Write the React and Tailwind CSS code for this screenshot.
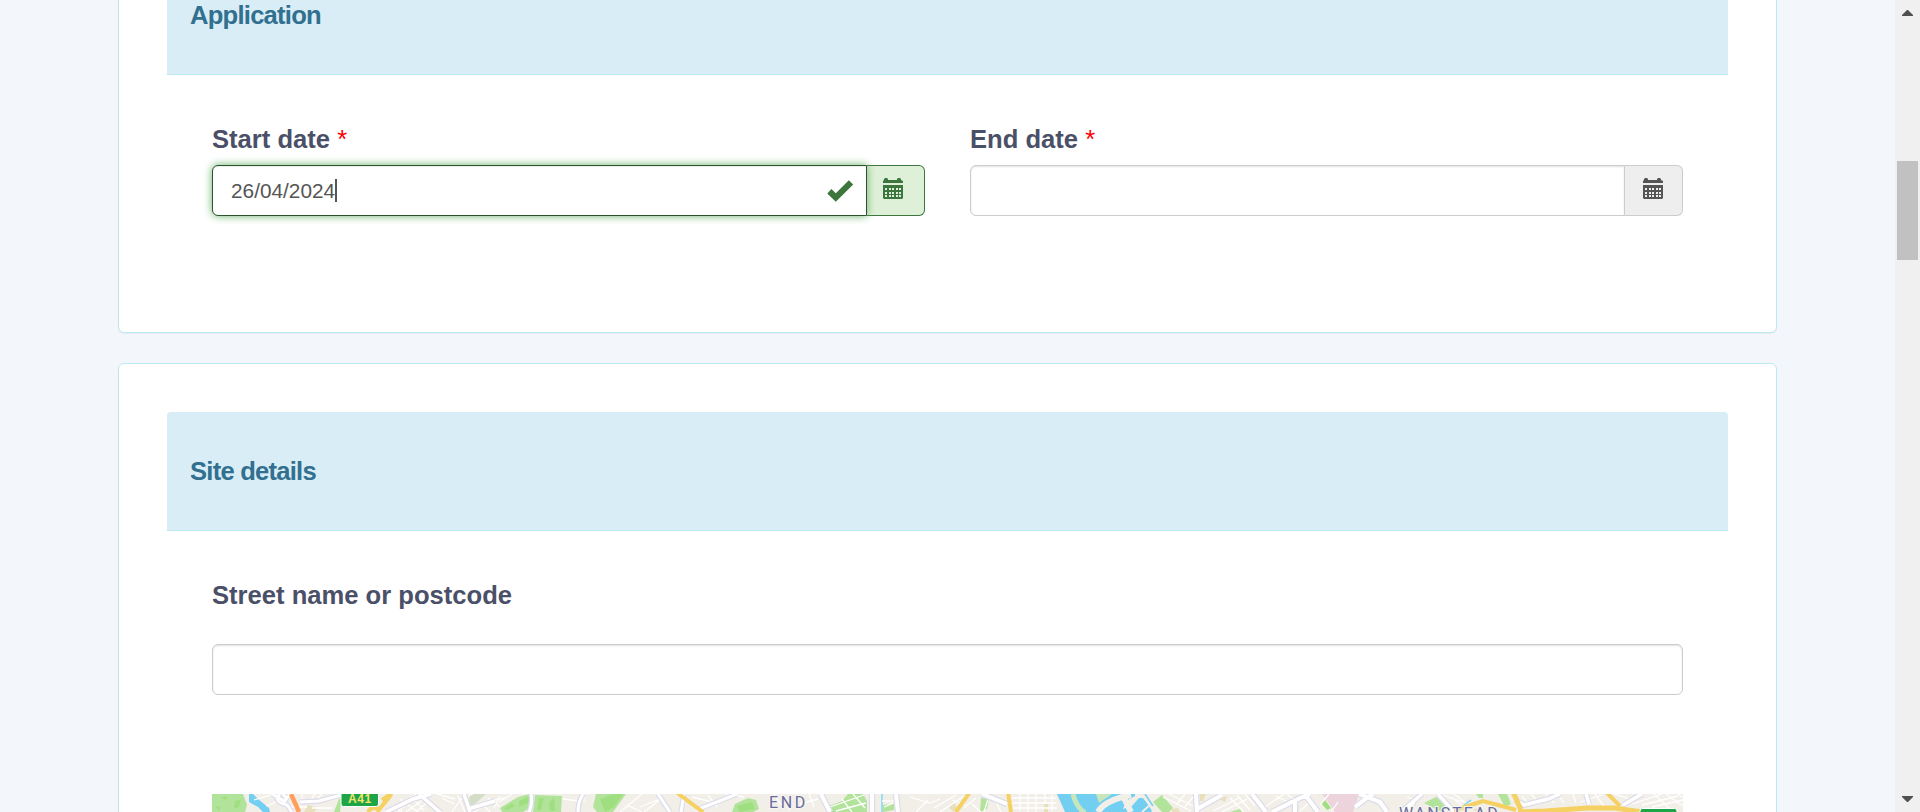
function CalendarIcon() {
  const cols = [2, 6, 9, 13, 16];
  const rows = [10, 14, 17];
  return (
    <svg width="20" height="21" viewBox="0 0 20 21" className="mb-1" fill="currentColor" aria-hidden="true">
      <path d="M0 5V3l1-1V1l1-1h2l1 1v1h9V1l1-1h2l1 1v1l2 1v2z" />
      <path
        fillRule="evenodd"
        d={
          'M0 7h20v13l-1 1H1l-1-1z' +
          rows.map((y) => cols.map((x) => `M${x} ${y}h2v2h-2z`).join('')).join('')
        }
      />
    </svg>
  );
}

function CheckIcon() {
  return (
    <svg width="27" height="22" viewBox="0 0 27 22" fill="#3c763d" aria-hidden="true">
      <path d="M.3 13.4 4.4 9l4.4 4.2L21.8.3l4.4 4.3L8.8 21.8z" />
    </svg>
  );
}

function PanelHeading({ children }) {
  return (
    <div className="flex h-[119px] items-center rounded-t-[4px] border-b border-[#bce8f1] bg-[#d9edf7] px-[23px]">
      <h3 className="text-[25.6px] leading-9 font-bold tracking-[-0.03em] text-[#31708f]">{children}</h3>
    </div>
  );
}

function Panel({ title, className, children }) {
  return (
    <section
      className={`rounded-[6px] border border-[#bce8f1] bg-white px-12 pt-12 shadow-[0_1px_1px_rgba(0,0,0,0.05)] ${className}`}
    >
      <PanelHeading>{title}</PanelHeading>
      <div className="px-[45px] pt-[46px]">{children}</div>
    </section>
  );
}

function DateField({ label, value, valid }) {
  return (
    <div className="flex-1">
      <div className="mb-2 text-[25.6px] leading-9 font-bold text-[#4a5068]">
        {label} <span className="font-normal text-[#ff0000]">*</span>
      </div>
      <div className="flex h-[51px]">
        <div
          className={
            valid
              ? 'z-10 flex w-[655px] items-center justify-between rounded-l-[6px] border border-[#2b542c] bg-white pr-3 pl-[18px] shadow-[inset_0_1px_1px_rgba(0,0,0,0.075),0_0_8px_#67b168]'
              : 'flex w-[655px] items-center rounded-l-[6px] border border-[#ccc] bg-white pl-[18px] shadow-[inset_0_1px_2px_rgba(0,0,0,0.12)]'
          }
        >
          {valid && (
            <>
              <div className="flex items-center">
                <span className="text-[20.8px] leading-7 text-[#555]">{value}</span>
                <span className="h-[23px] w-[2px] bg-[#555]" />
              </div>
              <CheckIcon />
            </>
          )}
        </div>
        <div
          className={
            valid
              ? 'flex flex-1 items-center justify-center rounded-r-[6px] border border-l-0 border-[#3c763d] bg-[#dff0d8] pr-1.5 text-[#3c763d]'
              : 'flex flex-1 items-center justify-center rounded-r-[6px] border border-l-0 border-[#ccc] bg-[#eee] pr-px text-[#555]'
          }
        >
          <CalendarIcon />
        </div>
      </div>
    </div>
  );
}

function Road({ d, w = 4 }) {
  return (
    <>
      <path d={d} fill="none" stroke="#dcdcea" strokeWidth={w + 2.4} />
      <path d={d} fill="none" stroke="#fff" strokeWidth={w} />
    </>
  );
}

function Street({ d }) {
  return <path d={d} fill="none" stroke="#fff" strokeWidth="1.3" />;
}

function MapStrip() {
  return (
    <svg width="1471" height="18" viewBox="0 0 1471 18" className="block w-full" aria-label="Map">
      <rect width="1471" height="18" fill="#f2eee8" />

      {/* parks */}
      <g fill="#b2e39b">
        <path d="M0 0h31l4 11-2 7H0z" />
        <path d="M122 18l5-13 3-1-2 14z" />
        <path d="M288 14 306 3l12-3v14l-7 4h-21z" />
        <path d="M323 1 350 2l-1 16h-28z" />
        <path d="M384 0h30l-13 18h-16l-4-5z" />
        <path d="M523 10l13-6 8 2 3 9-6 3h-21z" />
        <path d="M617 12l13-5 6-7h15l4 7v11h-38z" />
        <path d="M671 11l11-1v6l-11 2z" />
        <path d="M769 4l8 1-2 10-7 3z" />
        <path d="M941 8l9-7 11 13-4 4h-7z" />
        <path d="M1212 9l12-6 9 7-3 8-8-4z" />
        <path d="M1264 0h7v4h-4z" />
        <path d="M1286 0h9l4 10-6 3z" />
        <path d="M1018 18l10-3 2 3z" />
      </g>
      <g fill="#a0df80">
        <path d="M9 4l7-2-2 4zM23 7l6-2-2 8-5 2zM3 12l6 1-2 3z" />
        <path d="M307 7l10-5-1 7-9 4zM292 14l8-5 3 3-8 4z" />
        <path d="M327 4h5l-3 12h-4zM337 9l5-6 1 14h-5z" />
        <path d="M388 5l13-5h10l-9 13-9 5z" />
        <path d="M525 12l15-4 3 7-15 3z" />
        <path d="M1109 9l4-3 6 8-4 2z" />
      </g>
      <g fill="#e8dfbb">
        <path d="M96 11l10 3-4 4H92zM737 14l5-5 3 4-3 5zM832 10h4v8h-4zM960 15l6-1 2 4h-8zM988 0h6l-3 7h-3zM1007 5l8-3-2 6zM1103 14l4-1-1 5zM1260 16l8-2 2 4z" />
      </g>
      <path d="M258 0h16l-10 9-8 5z" fill="#d4dec7" />
      <path d="M1110 0h37l-6 18h-18z" fill="#ecd3dc" />

      {/* water */}
      <g fill="#73cff1">
        <path d="M37 0h4l5 5 11 9 1 4H51l-5-5-9-5z" />
        <path d="M845 0h78v2l-9 5-3 8 9-3 7-8h5l8 13-1 1h-86z" />
      </g>
      <path d="M670 0v18" stroke="#9bddf3" strokeWidth="2" />
      <path d="M1252 11l7-5" stroke="#73cff1" strokeWidth="1.5" />
      <path d="M861 0q3 13 12 19" fill="none" stroke="#c8e6bb" strokeWidth="5" />
      <path d="M884 0h16l-13 9z" fill="#c8e6bb" />
      <path d="M886 18q7-12 33-17M912 4l7 14" fill="none" stroke="#f2eee8" strokeWidth="6" />
      <path d="M929 0l9 11-8 7" fill="none" stroke="#f2eee8" strokeWidth="2" />
      <path d="M933 0l8 12" stroke="#73cff1" strokeWidth="1.5" />

      {/* side streets */}
      <Street d="M42 6l20-6M54 12l10-4M90 8V0M98 7l5-7M105 5l5-5M77 13h18M120 14h-20" />
      <Street d="M186 18l18-18M194 18l18-13M204 18l14-12M180 11l10 7M188 5l18 13M198 2l14 14M240 18l9-13 12-5M230 4l12 6M225 0l18 5M246 2l7 16" />
      <Street d="M262 18l19-12 12-2M270 10l8 8M276 4l12 9M288 2l-6 12M300 0l-13 8" />
      <Street d="M351 5l16 2M372 0v8M415 11l15 7M408 18l22-18M428 13l20-8M432 18l18-14M463 0l10 5M480 3l24 6M496 1l9 12M510 8l12-5M514 0l18 3" />
      <Street d="M562 0l7 11M570 1l7 15M588 10l18-5M597 0l5 13M618 13l34-12M624 17l30-8M630 5l10 13M641 0l12 14M670 7h15M672 13l12-5M698 3l20 6 10-4M704 18l12-12M722 14l22-13M728 18l24-16M740 6l14 5M784 8l5 10M777 2l-5 16" />
      <Street d="M800 4h44M800 9h44M801 14h44M808 0v17M816 0v18M824 0v18M833 0v10M840 1v16M760 10l9 8M752 14l12-10" />
      <Street d="M951 3l28 14M957 0l24 12M965 10l8-10M972 14l9-11M1001 17l26-13M1010 18l25-13M1018 4l14 14M1025 1l13 15M1033 0l10 12M1050 15l22-15M1064 2l10 5M1075 0l9 7M1088 17l10-9M1119 18l7-10M1117 0l-9 11" />
      <Street d="M1195 3l12 4M1239 3l13 10M1227 0l24 8M1242 0l12 9M1310 2l8 10M1319 0l9 10M1334 0l8 9M1346 0l6 9M1361 0l3 9M1368 8l22-7M1383 0l9 12M1402 0l16 5M1420 10l30-10M1430 11l36-9M1440 13l31-7M1442 0l17 16M1454 0l17 12M1466 0l5 4" />

      {/* roads */}
      <Road d="M68 0q-8 7 7 11l5 7M71 0l4 5M60 0l14 8M78 0l-6 8" w={3} />
      <Road d="M88 8l19-1 22-6" w={3} />
      <Road d="M174 18l27-13 18-5M207 0l22 19M252 0l6 18M256 15l27-8" w={3.5} />
      <Road d="M319 0q2 10-2 18M371 0q-5 8-5 18M446 0l12 18M472 0l-3 18M487 15l38-15" w={3} />
      <Road d="M609 0l9 18M660 0v18M684 0l2 18M770 0l25 10" w={4} />
      <Road d="M984 0l1 18M985 15l25-14M1040 0l14 18M1060 18l28-14 10-4M1094 2l12 16M1083 5v13M1143 13l12-9 6-4M1147 0l21 8 7 10" w={4} />
      <Road d="M1189 18l21-18M1194 18l8-10M1226 0l16 18M1303 6l9 5 24-6 12-5M1374 0l3 10M1411 11l19-11" w={3.5} />

      {/* main roads */}
      <path d="M79 0l8 18" stroke="#ff9f5a" strokeWidth="4.5" />
      <path d="M156 18q4-7 13-2M170 6l10-7M165 18l14-17" stroke="#f5d063" strokeWidth="4" fill="none" />
      <path d="M462-2l28 20M758-1l-16 20M835-1l3 20" stroke="#f5d063" strokeWidth="4" transform="translate(2 0)" className="hidden" />
      <g fill="none" stroke="#f5d063" strokeWidth="4">
        <path d="M464-2l27 20" />
        <path d="M758-2l-14 20" />
        <path d="M796-2l3 20" />
        <path d="M1242 16l14-4 15-5 15 4 18 5" />
        <path d="M1301-2l8 18" strokeWidth="5" />
        <path d="M1306 18l27-1 43-3h26l28 4" strokeWidth="5" />
        <path d="M1394-2l14 14" />
      </g>

      {/* route shields */}
      <rect x="129" y="-6" width="37.5" height="18.5" rx="2.5" fill="#1da548" stroke="#fff" />
      <text x="148" y="8.5" textAnchor="middle" fill="#f6e36b" fontSize="12" fontWeight="700" letterSpacing="0.6" className="font-['Liberation_Sans',sans-serif]">A41</text>
      <rect x="1428" y="14.5" width="37" height="18" rx="2.5" fill="#1da548" stroke="#fff" />

      {/* place names */}
      <g fill="#666c9b" stroke="#f7f5f2" strokeWidth="2" paintOrder="stroke" fontSize="16" className="font-['Roboto',sans-serif]">
        <text x="557" y="13.5" letterSpacing="2.6">END</text>
        <text x="1187" y="25" letterSpacing="2">WANSTEAD</text>
      </g>
    </svg>
  );
}

function Scrollbar() {
  return (
    <div className="flex h-full w-[25px] flex-col items-center justify-between bg-[#f0f0f0] pt-[10px] pb-[10px]">
      <svg width="11" height="6" viewBox="0 0 11 6" fill="#505050" aria-hidden="true">
        <path d="M5 0h1l5 5v1H0V5z" />
      </svg>
      <div className="mt-[145px] mb-auto h-[99px] w-[21px] bg-[#c1c1c1]" />
      <svg width="11" height="6" viewBox="0 0 11 6" fill="#505050" aria-hidden="true">
        <path d="M5 6h1l5-5V0H0v1z" />
      </svg>
    </div>
  );
}

export default function App() {
  return (
    <div className="flex h-[812px] overflow-hidden bg-[#f3f6fb] font-['Liberation_Sans',Arial,sans-serif]">
      <main className="h-full flex-1 overflow-hidden pr-[118px] pl-[118px]">
        <Panel title="Application" className="-mt-[93px] h-[426px]">
          <div className="flex gap-[45px]">
            <DateField label="Start date" value="26/04/2024" valid />
            <DateField label="End date" />
          </div>
        </Panel>
        <Panel title="Site details" className="mt-[30px] h-[600px]">
          <div className="text-[25.6px] leading-9 font-bold text-[#4a5068]">Street name or postcode</div>
          <div className="mt-[31px] h-[51px] rounded-[6px] border border-[#ccc] bg-white shadow-[inset_0_1px_2px_rgba(0,0,0,0.12)]" />
          <div className="mt-[99px]">
            <MapStrip />
          </div>
        </Panel>
      </main>
      <Scrollbar />
    </div>
  );
}
